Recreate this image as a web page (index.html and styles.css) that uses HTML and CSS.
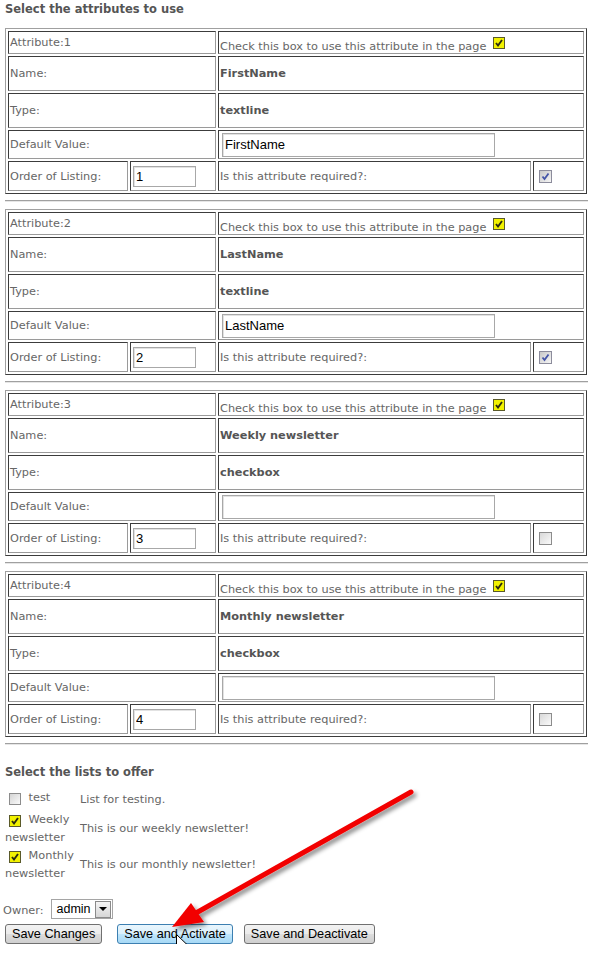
FILE: index.html
```html
<!DOCTYPE html>
<html>
<head>
<meta charset="utf-8">
<link rel="stylesheet" href="styles.css">
</head>
<body>
<div class="page">
  <h2 class="title">Select the attributes to use</h2>

  <div class="attr">
    <div class="c s2">Attribute:1</div>
    <div class="c s2"><span class="line">Check this box to use this attribute in the page <span class="cb yes top"><svg viewBox="0 0 10 10"><path d="M2 5 L4 7.5 L8 2" /></svg></span></span></div>
    <div class="c s2">Name:</div>
    <div class="c s2 b">FirstName</div>
    <div class="c s2">Type:</div>
    <div class="c s2 b">textline</div>
    <div class="c s2">Default Value:</div>
    <div class="c s2"><input class="txt" type="text" value="FirstName"></div>
    <div class="c">Order of Listing:</div>
    <div class="c"><input class="num" type="text" value="1"></div>
    <div class="c">Is this attribute required?:</div>
    <div class="c"><span class="cb req"><svg viewBox="0 0 11 11"><path d="M2.5 5.5 L4.5 8 L8.5 2.5" /></svg></span></div>
  </div>
  <hr class="sep">

  <div class="attr">
    <div class="c s2">Attribute:2</div>
    <div class="c s2"><span class="line">Check this box to use this attribute in the page <span class="cb yes top"><svg viewBox="0 0 10 10"><path d="M2 5 L4 7.5 L8 2" /></svg></span></span></div>
    <div class="c s2">Name:</div>
    <div class="c s2 b">LastName</div>
    <div class="c s2">Type:</div>
    <div class="c s2 b">textline</div>
    <div class="c s2">Default Value:</div>
    <div class="c s2"><input class="txt" type="text" value="LastName"></div>
    <div class="c">Order of Listing:</div>
    <div class="c"><input class="num" type="text" value="2"></div>
    <div class="c">Is this attribute required?:</div>
    <div class="c"><span class="cb req"><svg viewBox="0 0 11 11"><path d="M2.5 5.5 L4.5 8 L8.5 2.5" /></svg></span></div>
  </div>
  <hr class="sep">

  <div class="attr">
    <div class="c s2">Attribute:3</div>
    <div class="c s2"><span class="line">Check this box to use this attribute in the page <span class="cb yes top"><svg viewBox="0 0 10 10"><path d="M2 5 L4 7.5 L8 2" /></svg></span></span></div>
    <div class="c s2">Name:</div>
    <div class="c s2 b">Weekly newsletter</div>
    <div class="c s2">Type:</div>
    <div class="c s2 b">checkbox</div>
    <div class="c s2">Default Value:</div>
    <div class="c s2"><input class="txt" type="text" value=""></div>
    <div class="c">Order of Listing:</div>
    <div class="c"><input class="num" type="text" value="3"></div>
    <div class="c">Is this attribute required?:</div>
    <div class="c"><span class="cb req off"></span></div>
  </div>
  <hr class="sep">

  <div class="attr">
    <div class="c s2">Attribute:4</div>
    <div class="c s2"><span class="line">Check this box to use this attribute in the page <span class="cb yes top"><svg viewBox="0 0 10 10"><path d="M2 5 L4 7.5 L8 2" /></svg></span></span></div>
    <div class="c s2">Name:</div>
    <div class="c s2 b">Monthly newsletter</div>
    <div class="c s2">Type:</div>
    <div class="c s2 b">checkbox</div>
    <div class="c s2">Default Value:</div>
    <div class="c s2"><input class="txt" type="text" value=""></div>
    <div class="c">Order of Listing:</div>
    <div class="c"><input class="num" type="text" value="4"></div>
    <div class="c">Is this attribute required?:</div>
    <div class="c"><span class="cb req off"></span></div>
  </div>
  <hr class="sep">

  <h2 class="title lists-title">Select the lists to offer</h2>
  <div class="lists">
    <div class="lab"><span class="cb lst off"></span> test</div>
    <div class="desc">List for testing.</div>
    <div class="lab"><span class="cb lst yes"><svg viewBox="0 0 10 10"><path d="M2 5 L4 7.5 L8 2" /></svg></span> Weekly newsletter</div>
    <div class="desc">This is our weekly newsletter!</div>
    <div class="lab"><span class="cb lst yes"><svg viewBox="0 0 10 10"><path d="M2 5 L4 7.5 L8 2" /></svg></span> Monthly newsletter</div>
    <div class="desc">This is our monthly newsletter!</div>
  </div>

  <div class="owner">
    <span class="owner-label">Owner:</span>
    <span class="select"><span class="sel-val">admin</span><span class="sel-btn"><svg viewBox="0 0 8 4"><path d="M0 0 H8 L4 4 Z"/></svg></span></span>
  </div>

  <div class="buttons">
    <button class="btn">Save Changes</button>
    <button class="btn hot">Save and Activate</button>
    <button class="btn">Save and Deactivate</button>
  </div>
</div>

<svg class="overlay" width="593" height="959" viewBox="0 0 593 959">
  <defs>
    <filter id="sh" x="-20%" y="-20%" width="140%" height="140%">
      <feDropShadow dx="3" dy="3" stdDeviation="2" flood-color="#000" flood-opacity="0.45"/>
    </filter>
  </defs>
  <g filter="url(#sh)">
    <line x1="411" y1="792" x2="196" y2="913" stroke="#f20000" stroke-width="5" stroke-linecap="round"/>
    <polygon points="172,927 191,903 204,922" fill="#f20000"/>
  </g>
  <path transform="translate(176.5 934.5)" d="M0 0 L0 16 L4 12 L7 18.5 L9.5 17.5 L6.5 11 L11.5 11 Z" fill="#fff" stroke="#000" stroke-width="1" stroke-linejoin="miter"/>
</svg>
</body>
</html>
```

FILE: styles.css
```css
* { box-sizing: border-box; }

body {
  margin: 0;
  background: #fff;
  font-family: "DejaVu Sans", Verdana, sans-serif;
  font-size: 11.3px;
  color: #666;
  position: relative;
}

.page { padding-top: 2px; }

.title {
  margin: 0 0 12px 5px;
  font-size: 11.5px;
  line-height: 14px;
  font-weight: bold;
  color: #555;
}

.attr {
  display: grid;
  grid-template-columns: 120px 86px 313px 51px;
  grid-template-rows: 23px 35px 35px 29px 30px;
  gap: 2px;
  padding: 2px;
  width: 582px;
  margin-left: 5px;
  border: 1px solid;
  border-color: #a0a0a0 #3c3c3c #3c3c3c #a0a0a0;
}

.c {
  display: flex;
  align-items: center;
  padding: 0 1px;
  border: 1px solid;
  border-color: #3c3c3c #9a9a9a #9a9a9a #3c3c3c;
  white-space: nowrap;
  overflow: hidden;
}

.s2 { grid-column: span 2; }

.b { font-weight: bold; color: #555; }

.line { display: inline-block; }

.sep {
  width: 583px;
  height: 0;
  margin: 6px 0 7px 5px;
  border: 0;
  border-top: 1px solid #a0a0a0;
  border-bottom: 1px solid #e6e6e6;
}

/* checkboxes */
.cb {
  display: inline-block;
  width: 12px;
  height: 12px;
  border: 1px solid #5a5a2a;
  vertical-align: 1px;
}
.cb svg { display: block; width: 100%; height: 100%; }
.cb path { fill: none; stroke: #2a2a10; stroke-width: 1.9; }
.cb.yes { background: #f2f200; margin-left: 3px; }
.cb.top { margin-top: 4px; }

.cb.req {
  width: 13px;
  height: 13px;
  margin-left: 4px;
  border: 1px solid #8c8c9c;
  background: linear-gradient(135deg, #c8c8c8, #f6f6f6);
}
.cb.req path { stroke: #4455a8; stroke-width: 1.8; }
.cb.req.off { background: linear-gradient(135deg, #d8d8d8, #fafafa); border-color: #8c8c8c; }

.cb.lst {
  margin: 5px 4px 4px 4px;
  vertical-align: -8.5px;
}
.cb.off.lst {
  border-color: #8c8c8c;
  background: linear-gradient(135deg, #d4d4d4, #fafafa);
}

/* inputs */
.txt, .num {
  font-family: "Liberation Sans", Arial, sans-serif;
  font-size: 13px;
  color: #000;
  border: 1px solid #a8a8a8;
  box-shadow: inset 1px 1px 0 #e2e2e2;
  padding: 0 2px;
  background: #fff;
  outline: none;
}
.txt { width: 273px; height: 24px; margin-left: 2px; }
.num { width: 63px; height: 21px; margin-left: 1px; }

/* lists */
.lists-title { margin: 20px 0 9px 5px; }

.lists {
  display: grid;
  grid-template-columns: 73px auto;
  column-gap: 2px;
  row-gap: 1px;
  margin-left: 5px;
}
.lab { line-height: 14px; }
.desc { align-self: center; padding-top: 2px; line-height: 14px; }

/* owner */
.owner {
  display: flex;
  align-items: center;
  gap: 7px;
  margin-top: 18px;
  padding-left: 3px;
}
.owner-label { padding-top: 2px; }
.select {
  display: flex;
  align-items: center;
  justify-content: space-between;
  width: 62px;
  height: 20px;
  border: 1px solid #a5a5a5;
  background: #fff;
  padding: 0 1px 0 5px;
  font-family: "Liberation Sans", Arial, sans-serif;
  font-size: 12.5px;
  color: #000;
}
.sel-btn {
  display: flex;
  align-items: center;
  justify-content: center;
  width: 16px;
  height: 17px;
  border: 1px solid #8a8a8a;
  background: linear-gradient(#f4f4f4, #d6d6d6);
}
.sel-btn svg { width: 8px; height: 4px; }
.sel-btn path { fill: #000; }

/* buttons */
.buttons {
  display: flex;
  margin-top: 5px;
  padding-left: 5px;
}
.btn {
  height: 20px;
  padding: 0 6px;
  font-family: "Liberation Sans", Arial, sans-serif;
  font-size: 12.7px;
  color: #000;
  border: 1px solid #707070;
  border-radius: 3px;
  background: linear-gradient(#f2f2f2 0%, #ebebeb 50%, #dddddd 51%, #cfcfcf 100%);
  line-height: 18px;
}
.btn + .btn { margin-left: 15px; }
.btn.hot + .btn { margin-left: 11px; }
.btn.hot {
  border-color: #3c7fb1;
  background: linear-gradient(#eaf6fd 0%, #d9f0fc 50%, #bee6fd 51%, #a7d9f5 100%);
}

.overlay {
  position: absolute;
  left: 0;
  top: 0;
  pointer-events: none;
}
```
